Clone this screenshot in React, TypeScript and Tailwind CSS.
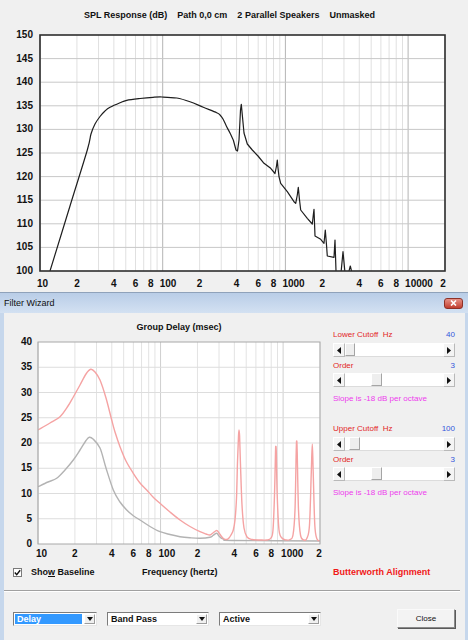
import React from "react";

const log = Math.log10;
const spx = (f: number) => 40 + 122.7 * (log(f) - 1);
const spy = (db: number) => 35 + (150 - db) * 4.72;
const gdx = (f: number) => 38 + 122.55 * (log(f) - 1);
const gdy = (ms: number) => 544 - ms * 5.05;

type Tick = { f: number; d: number };

const ticks = (max: number) => {
  const out: Tick[] = [];
  for (let k = 10; k <= 10000; k *= 10)
    for (let d = 1; d <= 9; d++) if (d * k <= max) out.push({ f: d * k, d });
  return out;
};

const splTicks = ticks(20000);
const gdTicks = ticks(2000);
const labelled = (t: Tick) => [1, 2, 4, 6, 8].includes(t.d);

const pts = (p: number[][]) => p.map(([x, y]) => `${x},${y}`).join(" ");

// catmull-rom through the points, as cubic beziers
const smooth = (p: number[][]) => {
  let d = `M${p[0][0]},${p[0][1]}`;
  for (let i = 0; i < p.length - 1; i++) {
    const p0 = p[i - 1] || p[i];
    const p1 = p[i];
    const p2 = p[i + 1];
    const p3 = p[i + 2] || p2;
    const c1x = p1[0] + (p2[0] - p0[0]) / 6;
    const c1y = p1[1] + (p2[1] - p0[1]) / 6;
    const c2x = p2[0] - (p3[0] - p1[0]) / 6;
    const c2y = p2[1] - (p3[1] - p1[1]) / 6;
    d += ` C${c1x},${c1y} ${c2x},${c2y} ${p2[0]},${p2[1]}`;
  }
  return d;
};

// SPL curve, page pixel coords
const splSmooth = [
  [50, 271], [70, 206], [87.3, 150], [91, 134], [95, 124], [100, 116.5], [105, 111], [110, 107.3],
  [120, 102.7], [126.7, 100.3], [140, 98.5], [153, 97.3], [162, 97], [176.7, 98], [190, 101.7],
  [203.3, 107.3], [216.7, 112.7], [220, 115], [223, 119], [226.7, 126.7], [230, 133],
  [233.3, 140],
];
const splRough = [
  [233.3, 140], [236, 150], [237.5, 151], [239, 140], [240.5, 110], [241.3, 104.3],
  [242.3, 115], [244, 133], [247.3, 144], [252.3, 150], [258, 156], [264, 163.3],
  [270.7, 168.3], [275, 173.5], [276.5, 166], [277.3, 160], [278, 168], [279, 176.7],
  [280.7, 183.3], [287.3, 191.7], [294, 201.7], [295.7, 203.3], [297.3, 195], [298.3, 187.3],
  [299.3, 198], [300.7, 210], [307.3, 218.3], [312.3, 224], [313.3, 215], [314, 209.3],
  [315, 236], [320.7, 239.3], [324, 243.3], [325.3, 230], [326.5, 245], [327.3, 256],
  [334, 257.3], [335, 240], [336, 271],
];
const splSpikes = [
  [[341, 273], [343, 251.7], [345, 273]],
  [[348.5, 273], [350.3, 266], [352, 273]],
];

const gdPink = [
  [38, 430], [50, 423], [60, 416.7], [68, 406], [73.3, 397], [80, 385], [86, 374],
  [90.7, 369.3], [95, 372], [100, 380], [106, 398], [111.7, 420], [115, 432], [120, 446.7],
  [126, 461], [133.3, 473.3], [140, 483], [146.7, 490], [153, 497], [160, 503.3], [170, 512],
  [180, 520], [190, 526.5], [200, 531.7], [206, 534], [210, 535], [213, 533], [216.7, 530.5],
  [219, 533], [221.7, 536.7], [224, 539], [226.7, 539.5], [229, 538], [231, 535], [233.3, 530],
  [235, 520], [236.5, 498], [237.5, 462], [238.5, 436], [239, 430], [239.6, 436],
  [240.5, 465], [242, 505], [244, 528], [247, 537], [252, 539.5], [260, 540], [267, 540],
  [271, 538], [273, 530], [274.5, 495], [275.5, 452], [275.8, 447], [276.3, 452],
  [277.2, 495], [279, 530], [282, 538], [286, 540], [290, 539.5], [293, 535], [295, 510],
  [296.2, 452], [296.7, 441], [297.2, 452], [298.5, 510], [300.5, 535], [304, 540],
  [307, 538], [309.5, 525], [311.3, 472], [312.3, 444], [313.2, 472], [314.8, 525],
  [317, 539], [320, 541],
];

const gdGray = [
  [38, 486.7], [48, 482], [56.7, 478.3], [65, 470], [73.3, 460], [80, 450], [86, 440.5],
  [89.3, 437.3], [93, 439], [100, 448], [106, 468], [113.3, 490], [120, 502], [126.7, 510],
  [133, 515.5], [140, 520], [150, 526.5], [160, 531.7], [170, 534.5], [180, 536.7],
  [190, 537.8], [200, 538.3], [210, 537.3], [213, 535.5], [216.7, 533.3], [219, 536],
  [221.7, 538.3], [226.7, 540], [232, 540.5], [320, 541],
];

function SplChart() {
  return (
    <svg width={407} height={238} viewBox="39 34 407 238" className="block">
      <defs>
        <clipPath id="splclip">
          <rect x={40} y={35} width={405} height={236} />
        </clipPath>
      </defs>
      <rect x={40} y={35} width={405} height={236} fill="#ffffff" />
      {splTicks.map((t) => (
        <line
          key={t.f}
          x1={spx(t.f)}
          x2={spx(t.f)}
          y1={35}
          y2={271}
          stroke={t.d === 1 ? "#b4b4b4" : "#e0e0e0"}
          strokeWidth={1}
        />
      ))}
      {[145, 140, 135, 130, 125, 120, 115, 110, 105].map((v) => (
        <line key={v} x1={40} x2={445} y1={spy(v)} y2={spy(v)} stroke="#c8c8c8" strokeWidth={1} />
      ))}
      <g clipPath="url(#splclip)" fill="none" stroke="#1e1e1e" strokeWidth={1.2} strokeLinejoin="round">
        <path d={smooth(splSmooth)} />
        <polyline points={pts(splRough)} />
        {splSpikes.map((s, i) => (
          <polyline key={i} points={pts(s)} />
        ))}
      </g>
      <rect x={40} y={35} width={405} height={236} fill="none" stroke="#2e2e2e" strokeWidth={1.6} />
    </svg>
  );
}

function GdChart() {
  return (
    <svg width={284} height={204} viewBox="37 341 284 204" className="block">
      <defs>
        <clipPath id="gdclip">
          <rect x={38} y={342} width={282} height={202} />
        </clipPath>
      </defs>
      <rect x={38} y={342} width={282} height={202} fill="#ffffff" />
      {gdTicks.map((t) => (
        <line
          key={t.f}
          x1={gdx(t.f)}
          x2={gdx(t.f)}
          y1={342}
          y2={544}
          stroke={t.d === 1 ? "#cfcfcf" : "#e3e3e3"}
          strokeWidth={1}
        />
      ))}
      {[35, 30, 25, 20, 15, 10, 5].map((v) => (
        <line key={v} x1={38} x2={320} y1={gdy(v)} y2={gdy(v)} stroke="#dddddd" strokeWidth={1} />
      ))}
      <g clipPath="url(#gdclip)" fill="none" strokeWidth={1.4} strokeLinejoin="round">
        <path d={smooth(gdGray)} stroke="#b3b3b3" />
        <path d={smooth(gdPink)} stroke="#f5a3a3" />
      </g>
      <rect x={38} y={342} width={282} height={202} fill="none" stroke="#a8a8a8" strokeWidth={1} />
    </svg>
  );
}

function Arrow({ dir }: { dir: "left" | "right" }) {
  return (
    <div className="flex h-full w-[12px] items-center justify-center border border-[#b9b9b9] border-t-white border-l-white bg-[#f4f4f4]">
      <svg width="4" height="7" viewBox="0 0 4 7">
        <path d={dir === "left" ? "M4 0 L0 3.5 L4 7Z" : "M0 0 L4 3.5 L0 7Z"} fill="#111" />
      </svg>
    </div>
  );
}

function ScrollBar({ thumb }: { thumb: string }) {
  return (
    <div className="flex h-[14px] bg-white">
      <Arrow dir="left" />
      <div className="flex flex-1 border-b border-[#dcdcdc]">
        <div className={"h-full border border-[#a5a5a5] border-t-white border-l-white bg-[#eeeeee] " + thumb} />
      </div>
      <Arrow dir="right" />
    </div>
  );
}

function LabelRow({ label, value }: { label: string; value: string }) {
  return (
    <div className="flex h-[12px] items-center justify-between text-[8px] leading-[12px]">
      <span className="whitespace-pre text-[#e32626]">{label}</span>
      <span className="text-[#3456dc]">{value}</span>
    </div>
  );
}

function Slope() {
  return <div className="mt-[6px] h-[12px] text-[8px] leading-[12px] text-[#ee3cee]">Slope is -18 dB per octave</div>;
}

function Combo({ text, width, selected }: { text: string; width: string; selected?: boolean }) {
  return (
    <div className={"flex h-[14px] border border-[#7c7c7c] border-b-[#e6e6e6] border-r-[#e6e6e6] bg-white p-[1px] " + width}>
      <div
        className={
          "flex flex-1 items-center pl-[2px] text-[9px] font-bold leading-[10px] " +
          (selected ? "bg-[#3399ff] text-white" : "text-[#111]")
        }
      >
        {text}
      </div>
      <div className="ml-[2px] flex w-[11px] items-center justify-center border border-[#9c9c9c] border-t-white border-l-white bg-[#f0f0f0]">
        <svg width="6" height="4" viewBox="0 0 6 4">
          <path d="M0 0 L6 0 L3 4Z" fill="#111" />
        </svg>
      </div>
    </div>
  );
}

export default function App() {
  return (
    <div className="h-[640px] w-[468px] overflow-hidden bg-[#f0f0f0] font-['Liberation_Sans',Arial,sans-serif] text-[#111]">
      {/* SPL chart */}
      <div className="h-[292px]">
        <div className="h-[34px] whitespace-pre pl-[84px] pt-[9px] text-[9px] font-bold leading-[12px]">
          {"SPL Response (dB)    Path 0,0 cm    2 Parallel Speakers    Unmasked"}
        </div>
        <div className="flex">
          <div className="relative h-[238px] w-[39px] text-[10px] font-bold">
            {[150, 145, 140, 135, 130, 125, 120, 115, 110, 105, 100].map((v) => (
              <span key={v} className="absolute right-[6px] leading-[12px]" style={{ top: spy(v) - 34 - 6 }}>
                {v}
              </span>
            ))}
          </div>
          <SplChart />
        </div>
        <div className="relative h-[20px] text-[10px] font-bold">
          {splTicks.filter(labelled).map((t) => {
            const x = spx(t.f);
            const multi = t.d === 1;
            return (
              <span
                key={t.f}
                className={"absolute top-[6px] leading-[12px] " + (multi ? "" : "-translate-x-1/2")}
                style={{ left: multi ? x - 3 : t.f === 20000 ? x - 2 : x }}
              >
                {multi ? t.f : t.d}
              </span>
            );
          })}
        </div>
      </div>

      {/* Filter Wizard window */}
      <div className="flex h-[348px] flex-col border-t border-[#8fa2ba] bg-[#c6d7ec]">
        <div className="flex h-[20px] items-center justify-between bg-linear-to-b from-[#b9cde7] to-[#d3e1f2] pl-[4px] pr-[5px]">
          <span className="text-[9px] leading-[12px] text-[#101010]">Filter Wizard</span>
          <div className="flex h-[11px] w-[19px] items-center justify-center rounded-[3px] border border-[#8e3127] bg-linear-to-b from-[#e69086] to-[#c13c2e]">
            <svg width="7" height="6" viewBox="0 0 7 6">
              <path d="M1 0.5 L6 5.5 M6 0.5 L1 5.5" stroke="#ffffff" strokeWidth="1.6" />
            </svg>
          </div>
        </div>
        <div className="ml-[4px] mr-[3px] flex-1 bg-[#f0f0f0]">
          <div className="flex">
            {/* chart column */}
            <div className="w-[318px]">
              <div className="flex h-[28px] items-center pl-[34px]">
                <div className="w-[282px] text-center text-[9px] font-bold leading-[12px]">Group Delay (msec)</div>
              </div>
              <div className="flex">
                <div className="relative h-[204px] w-[33px] text-[10px] font-bold">
                  {[40, 35, 30, 25, 20, 15, 10, 5, 0].map((v) => (
                    <span
                      key={v}
                      className="absolute right-[5px] leading-[12px]"
                      style={{ top: gdy(v) - 341 - 6 }}
                    >
                      {v}
                    </span>
                  ))}
                </div>
                <GdChart />
              </div>
              <div className="relative h-[18px] text-[10px] font-bold">
                {gdTicks.filter(labelled).map((t) => {
                  const x = gdx(t.f) - 4;
                  const multi = t.d === 1;
                  return (
                    <span
                      key={t.f}
                      className={"absolute top-[3px] leading-[12px] " + (multi ? "" : "-translate-x-1/2")}
                      style={{ left: multi ? x - 2 : t.f === 2000 ? x - 1 : x }}
                    >
                      {multi ? t.f : t.d}
                    </span>
                  );
                })}
              </div>
            </div>

            {/* controls */}
            <div className="ml-[10px] w-[123px] pl-[1px] pt-[16px]">
              <LabelRow label="Lower Cutoff  Hz" value="40" />
              <div className="mt-[2px]">
                <ScrollBar thumb="ml-0 w-[10px]" />
              </div>
              <div className="mt-[3px]">
                <LabelRow label="Order" value="3" />
              </div>
              <div className="mt-[1px]">
                <ScrollBar thumb="ml-[26px] w-[11px]" />
              </div>
              <Slope />

              <div className="mt-[18px]">
                <LabelRow label="Upper Cutoff  Hz" value="100" />
              </div>
              <div className="mt-[2px]">
                <ScrollBar thumb="ml-[4px] w-[11px]" />
              </div>
              <div className="mt-[3px]">
                <LabelRow label="Order" value="3" />
              </div>
              <div className="mt-[1px]">
                <ScrollBar thumb="ml-[26px] w-[11px]" />
              </div>
              <Slope />
            </div>
          </div>

          {/* baseline row */}
          <div className="flex h-[18px] items-center text-[9px] font-bold leading-[12px]">
            <div className="flex w-[138px] items-center pl-[9px]">
              <div className="flex h-[9px] w-[9px] items-center justify-center border border-[#7a7a7a] bg-white">
                <svg width="7" height="7" viewBox="0 0 7 7">
                  <path d="M0.8 3.5 L2.7 5.6 L6.2 1.2" fill="none" stroke="#111" strokeWidth="1.4" />
                </svg>
              </div>
              <span className="ml-[9px]">
                Sho<span className="underline">w</span> Baseline
              </span>
            </div>
            <div className="w-[191px]">Frequency (hertz)</div>
            <div className="text-[#f01818]">Butterworth Alignment</div>
          </div>

          <div className="mr-[5px] mt-[9px] h-[2px] border-t border-b border-t-[#a0a0a0] border-b-white" />

          <div className="mt-[17px] flex h-[19px] items-center pl-[9px]">
            <Combo text="Delay" width="w-[84px]" selected />
            <div className="ml-[10px]">
              <Combo text="Band Pass" width="w-[102px]" />
            </div>
            <div className="ml-[10px]">
              <Combo text="Active" width="w-[102px]" />
            </div>
            <div className="ml-auto mr-[10px] flex h-[19px] w-[58px] items-center justify-center border border-[#8a8a8a] border-t-[#fafafa] border-l-[#fafafa] bg-[#f3f3f3] text-[8px] leading-[10px] shadow-[1px_1px_0_#5a5a5a]">
              Close
            </div>
          </div>
        </div>
      </div>
    </div>
  );
}
